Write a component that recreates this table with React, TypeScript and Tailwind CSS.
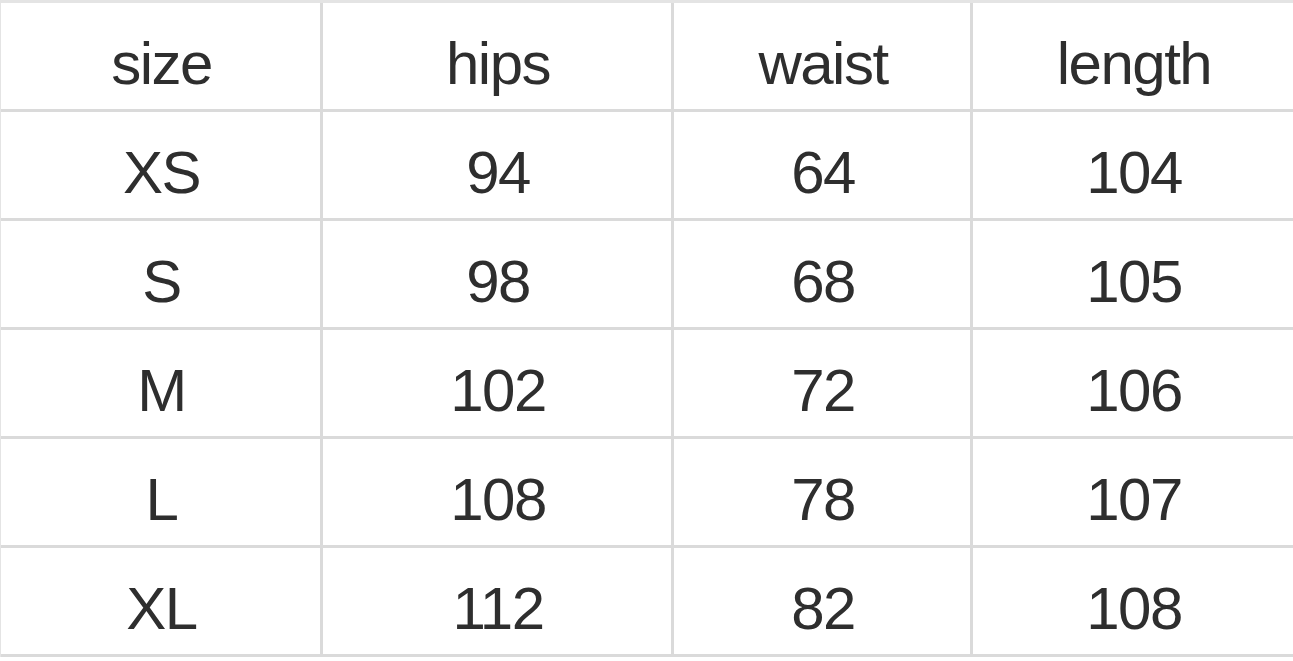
const header = ["size", "hips", "waist", "length"];

const rows = [
  ["XS", "94", "64", "104"],
  ["S", "98", "68", "105"],
  ["M", "102", "72", "106"],
  ["L", "108", "78", "107"],
  ["XL", "112", "82", "108"],
];

const colBorder = ["border-r-[3px]", "border-r-[3px]", "border-r-[3px]", ""];

function Row({ cells }: { cells: string[] }) {
  return (
    <div className="grid grid-cols-[322px_351px_299px_1fr] h-[109px] border-b-[3px] border-[#dadada]">
      {cells.map((c, i) => (
        <div
          key={i}
          className={`flex items-center justify-center pt-[16px] pl-[2px] border-[#dadada] ${colBorder[i]}`}
        >
          {c}
        </div>
      ))}
    </div>
  );
}

export default function App() {
  return (
    <div className="w-[1293px] h-[661px] bg-white overflow-hidden font-['Liberation_Sans',Arial,sans-serif] text-[60px] tracking-[-1.5px] leading-none text-[#2e2e2e]">
      <div className="border-t-[3px] border-l border-[#e4e4e4]">
        <Row cells={header} />
        {rows.map((r) => (
          <Row key={r[0]} cells={r} />
        ))}
      </div>
    </div>
  );
}
